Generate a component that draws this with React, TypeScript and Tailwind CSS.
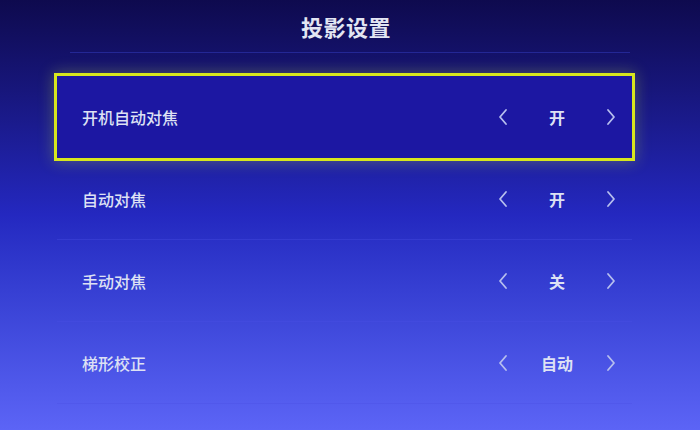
const cjk = "font-['Noto_Sans_CJK_SC','Noto_Sans',sans-serif]";

type Row = { label: string; value: string };

const rows: Row[] = [
  { label: "开机自动对焦", value: "开" },
  { label: "自动对焦", value: "开" },
  { label: "手动对焦", value: "关" },
  { label: "梯形校正", value: "自动" },
];

function Chevron({ dir }: { dir: "left" | "right" }) {
  return (
    <svg width="10" height="18" viewBox="0 0 10 18" className="text-[#b7bfee]">
      <polyline
        points={dir === "left" ? "8,2 2,9 8,16" : "2,2 8,9 2,16"}
        fill="none"
        stroke="currentColor"
        strokeWidth="1.8"
        strokeLinecap="round"
        strokeLinejoin="round"
      />
    </svg>
  );
}

export default function App() {
  return (
    <div
      className={`${cjk} h-[430px] w-[700px] overflow-hidden bg-gradient-to-b from-[#0e0a4e] via-[#2428c0] to-[#5c64f6] text-[#dde1f4]`}
    >
      {/* Header */}
      <header className="mx-[70px] flex h-[53px] items-center justify-center border-b border-[#2b30a8]/70">
        <h1 className="-translate-x-[4px] text-[22px] font-bold tracking-wide text-[#e2e5f2]">投影设置</h1>
      </header>

      {/* Settings list */}
      <div className="ml-[57px] mt-[23px] w-[575px]">
        {rows.map((row, i) => (
          <div
            key={row.label}
            className={
              i === 0
                ? "flex h-[82px] items-center bg-[#1c17a2] pl-[25px] pr-[16px] outline-[3px] outline-[#d7e61e] shadow-[0_0_14px_4px_rgba(190,220,60,0.3)]"
                : "flex h-[82px] items-center border-b border-[#4a50e6]/35 pl-[25px] pr-[16px]"
            }
          >
            <span className="flex-1 text-[16px] font-medium">{row.label}</span>
            <div className="flex items-center">
              <Chevron dir="left" />
              <span className="w-[98px] text-center text-[16px] font-semibold">{row.value}</span>
              <Chevron dir="right" />
            </div>
          </div>
        ))}
      </div>
    </div>
  );
}
